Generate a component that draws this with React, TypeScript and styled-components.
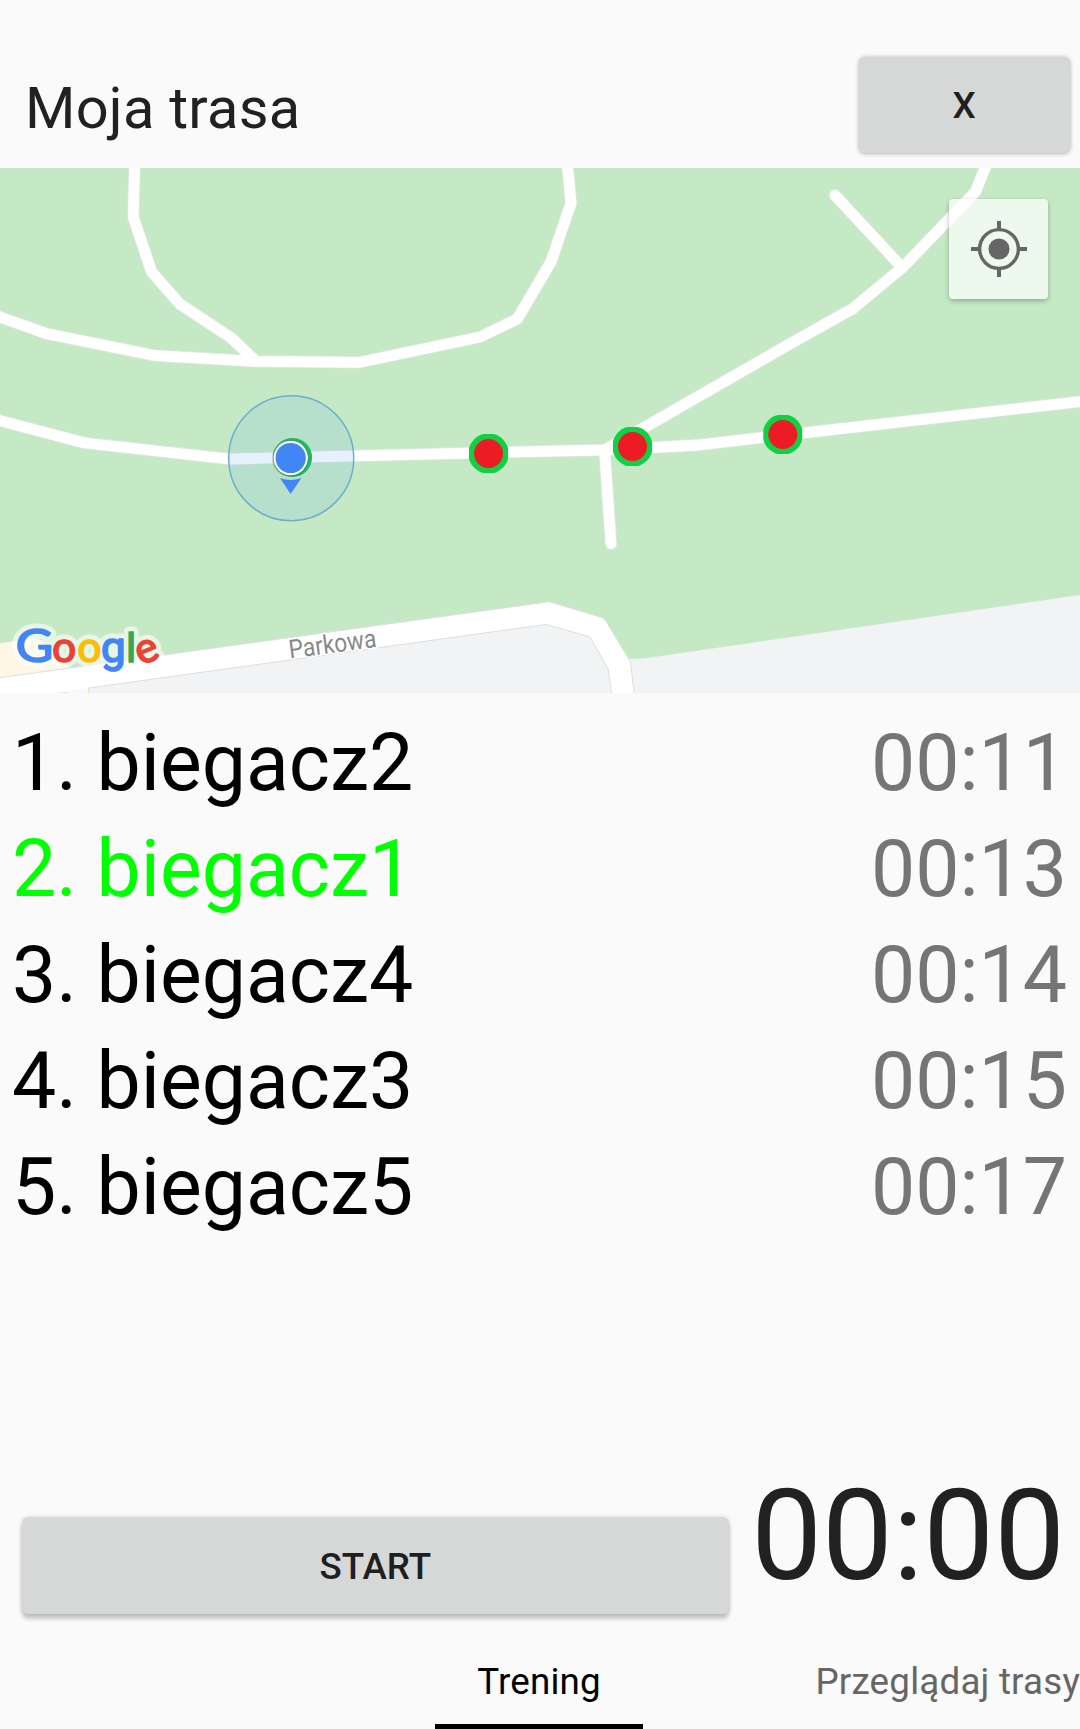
import React from "react";
import styled, { createGlobalStyle } from "styled-components";

const GlobalStyle = createGlobalStyle`
  * { box-sizing: border-box; }
  body { margin: 0; background: #fafafa; }
`;

const Screen = styled.main`
  display: flex;
  flex-direction: column;
  width: 1080px;
  height: 1729px;
  overflow: hidden;
  background: #fafafa;
  color: #212121;
  font-family: Roboto, "Liberation Sans", sans-serif;
`;

const Header = styled.header`
  display: flex;
  justify-content: space-between;
  align-items: flex-start;
  height: 168px;
  padding: 56.5px 10.5px 0 25px;
`;

const Title = styled.h1`
  margin: 17.5px 0 0;
  font-size: 57.75px;
  font-weight: 400;
  line-height: 68px;
  letter-spacing: 0.25px;
`;

const RaisedButton = styled.button<{ $width: number; $depth: number }>`
  width: ${(p) => p.$width}px;
  height: 96.5px;
  padding: 3px 0 0;
  border: 0;
  border-radius: 6px;
  background: #d6d8d7;
  color: #1f1f1f;
  font: 500 36.75px/44px Roboto, "Liberation Sans", sans-serif;
  box-shadow:
    0 ${(p) => p.$depth}px 4px rgba(0, 0, 0, 0.2),
    0 0 5px rgba(0, 0, 0, 0.13);
`;

const MapPanel = styled.section`
  position: relative;
  height: 525px;
  flex: none;
  overflow: hidden;
  background: #c5e9c5;
`;

const MapCanvas = styled.svg`
  display: block;
`;

const LocateButton = styled.button`
  position: absolute;
  top: 31px;
  right: 32px;
  display: grid;
  place-items: center;
  width: 99px;
  height: 100px;
  padding: 0;
  border: 0;
  border-radius: 4px;
  background: rgba(255, 255, 255, 0.7);
  box-shadow: 0 2px 5px rgba(0, 0, 0, 0.28);
`;

const Ranking = styled.ol`
  flex: 1;
  margin: 0;
  padding: 17px 13px 0 12px;
  list-style: none;
`;

const Row = styled.li<{ $current?: boolean }>`
  display: flex;
  justify-content: space-between;
  height: 106px;
  font-size: 78.75px;
  line-height: 106px;
  color: ${(p) => (p.$current ? "#00ff00" : "#000")};
`;

const Time = styled.span`
  color: #757575;
`;

const Controls = styled.section`
  display: flex;
  align-items: flex-start;
  justify-content: space-between;
  height: 157px;
  padding: 0 15px 0 22px;
`;

const StartSlot = styled.div`
  padding-top: 54px;
`;

const Timer = styled.div`
  font-size: 126px;
  line-height: 147px;
`;

const Tabs = styled.nav`
  display: grid;
  grid-template-columns: 435px 208px 1fr;
  height: 109px;
`;

const Tab = styled.a<{ $active?: boolean }>`
  display: flex;
  justify-content: ${(p) => (p.$active ? "center" : "flex-end")};
  grid-column: ${(p) => (p.$active ? 2 : 3)};
  padding-top: 40px;
  border-bottom: 5px solid ${(p) => (p.$active ? "#000" : "transparent")};
  font-size: 36.75px;
  line-height: 44px;
  letter-spacing: 0.2px;
  white-space: nowrap;
  color: ${(p) => (p.$active ? "#000" : "#666")};
`;

const roads = [
  "M134.5 150V168L133.3 217L151.5 271.7L179.8 304L231.4 338L255.5 361",
  "M-10 313L0 317L47.2 333.8L155.7 355.7L255.5 361.3L359.9 362.3L480 337L517.3 319L551 261.7L571 203.3L566 150",
  "M-10 418L0 420.7L85 443L229 459L540 451.3L605 450L698.7 445L764 437.3L1090 400.5",
  "M605 450L796.7 340L852.3 309L902.3 267.7L975.5 191.7L985 168L992 150",
  "M835 195.3L902.3 267.7",
  "M604.5 450L611 543.7",
];

const checkpoints = [
  [488.5, 453.5],
  [632.5, 446.5],
  [782.8, 434.5],
];

const logoLetters = [
  { c: "G", x: 34.6, fill: "#4285f4", size: 46, width: 37.6 },
  { c: "o", x: 64.2, fill: "#ea4335", size: 42 },
  { c: "o", x: 89.3, fill: "#fbbc05", size: 42 },
  { c: "g", x: 113.4, fill: "#4285f4", size: 42, width: 24.6, font: "Roboto, sans-serif" },
  { c: "l", x: 131.2, fill: "#34a853", size: 41 },
  { c: "e", x: 147, fill: "#ea4335", size: 42, turn: -22 },
];

function Letters({ halo }: { halo?: boolean }) {
  return (
    <g
      fontFamily="Lato, sans-serif"
      textAnchor="middle"
      opacity={halo ? 0.6 : 1}
      strokeWidth={halo ? 11 : 1.7}
      strokeLinejoin="round"
      aria-hidden={halo}
    >
      {logoLetters.map((l) => (
        <text
          key={l.x}
          x={l.x}
          y={662}
          fontSize={l.size}
          fontFamily={l.font}
          textLength={l.width}
          lengthAdjust={l.width ? "spacingAndGlyphs" : undefined}
          fill={halo ? "#fff" : l.fill}
          stroke={halo ? "#fff" : l.fill}
          transform={l.turn ? `rotate(${l.turn} ${l.x} 651.5)` : undefined}
        >
          {l.c}
        </text>
      ))}
    </g>
  );
}

function Checkpoint({ x, y }: { x: number; y: number }) {
  return (
    <svg x={x - 19.5} y={y - 19.5} width="39" height="39" viewBox="-19.5 -19.5 39 39">
      <circle r="20.2" fill="#12d045" />
      <circle r="14.5" fill="#ed1c24" />
    </svg>
  );
}

function RouteMap() {
  return (
    <MapPanel>
      <MapCanvas width="1080" height="525" viewBox="0 168 1080 525">
        <path d="M629 659L644 658.5L1080 595V693H620Z" fill="#f1f3f4" />
        <path d="M0 643.3L38 638L70 668L0 678Z" fill="#fef7e6" />
        <path d="M88 688L547 624L590 637L608 669L612 693H88Z" fill="#f1f3f4" />
        <g fill="none" strokeLinejoin="round" strokeLinecap="round">
          {roads.map((d) => (
            <path key={d} d={d} stroke="#dfe6df" strokeWidth="12.4" />
          ))}
          {roads.map((d) => (
            <path key={d} d={d} stroke="#fff" strokeWidth="10.8" />
          ))}
        </g>
        <path
          d="M-4 678.2L540 603L548.6 601.6L602 617.5Q605 619 606.5 622L630.4 661.7L634.8 700H612.4L608.3 669.3L590 637L547 624.6L540 625.3L88.5 688V700H-4Z"
          fill="#fff"
          stroke="#dddfe0"
          strokeWidth="1"
        />
        <path d="M54 693L69 691.4V693Z" fill="#f2e8d0" />
        <path d="M70 690.5L88 688V693H70Z" fill="#f9f9f9" />
        <path d="M88.5 688V693" stroke="#efe2c0" />

        <text
          x="290"
          y="658.5"
          transform="rotate(-7.5 290 658.5)"
          fontFamily="Roboto, sans-serif"
          fontSize="26"
          textLength="88"
          lengthAdjust="spacingAndGlyphs"
          fill="#85898c"
          stroke="#fff"
          strokeWidth="3"
          paintOrder="stroke"
        >
          Parkowa
        </text>

        {checkpoints.map(([x, y]) => (
          <Checkpoint key={x} x={x} y={y} />
        ))}
        <circle cx="292.5" cy="457.5" r="19.6" fill="#0fba4a" />
        <circle
          cx="291.2"
          cy="458.2"
          r="62.5"
          fill="rgba(115,180,240,0.18)"
          stroke="#6caed0"
          strokeWidth="1.5"
        />
        <circle cx="290.3" cy="458.4" r="18.4" fill="rgba(0,0,0,0.14)" />
        <circle cx="290.7" cy="458" r="17.2" fill="#fff" />
        <circle cx="290.7" cy="458" r="15.1" fill="#4285f4" />
        <path d="M280 478Q290.7 482 301.4 478L290.6 494Z" fill="#4285f4" />

        <Letters halo />
        <Letters />
      </MapCanvas>
      <LocateButton aria-label="Moja lokalizacja">
        <svg width="56" height="56" viewBox="0 0 56 56" fill="none" stroke="#666">
          <circle cx="28" cy="28" r="19.4" strokeWidth="3.4" />
          <circle cx="28" cy="28" r="10.5" fill="#666" stroke="none" />
          <path d="M28 0V8M28 48V56M0 28H8M48 28H56" strokeWidth="4" />
        </svg>
      </LocateButton>
    </MapPanel>
  );
}

const runners = [
  { name: "biegacz2", time: "00:11" },
  { name: "biegacz1", time: "00:13", current: true },
  { name: "biegacz4", time: "00:14" },
  { name: "biegacz3", time: "00:15" },
  { name: "biegacz5", time: "00:17" },
];

export default function App() {
  return (
    <Screen>
      <GlobalStyle />
      <Header>
        <Title>Moja trasa</Title>
        <RaisedButton $width={211} $depth={1}>X</RaisedButton>
      </Header>
      <RouteMap />
      <Ranking>
        {runners.map((r, i) => (
          <Row key={r.name} $current={r.current}>
            <span>{`${i + 1}. ${r.name}`}</span>
            <Time>{r.time}</Time>
          </Row>
        ))}
      </Ranking>
      <Controls>
        <StartSlot>
          <RaisedButton $width={706.5} $depth={5}>START</RaisedButton>
        </StartSlot>
        <Timer>00:00</Timer>
      </Controls>
      <Tabs>
        <Tab $active>Trening</Tab>
        <Tab>Przeglądaj trasy</Tab>
      </Tabs>
    </Screen>
  );
}
